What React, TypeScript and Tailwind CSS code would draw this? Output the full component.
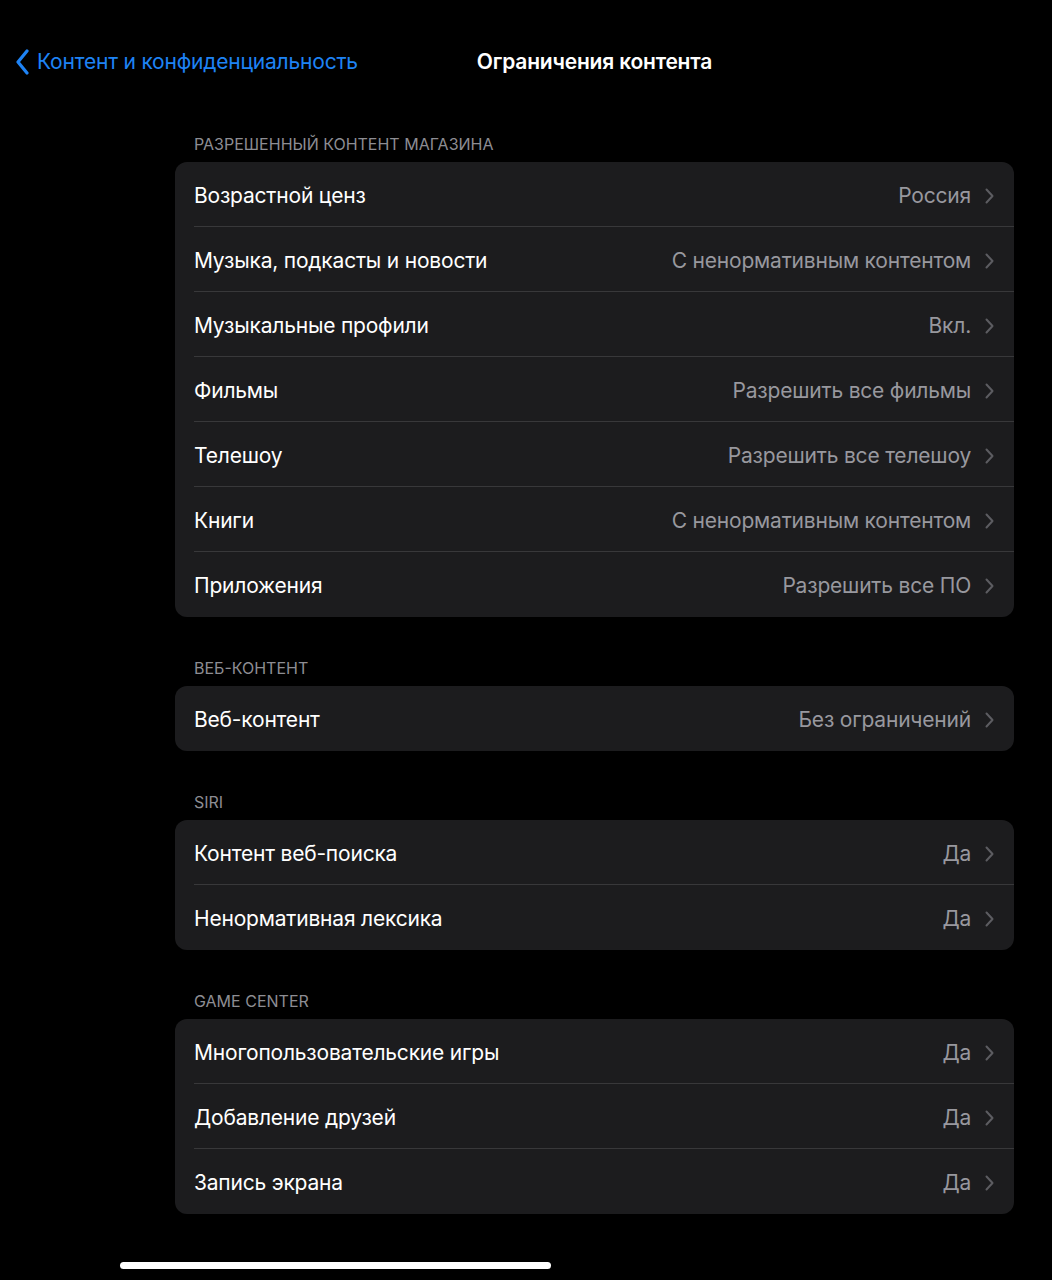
import React from "react";

type Row = { label: string; value: string };
type Section = { title: string; rows: Row[] };

const sections: Section[] = [
  {
    title: "Разрешенный контент магазина",
    rows: [
      { label: "Возрастной ценз", value: "Россия" },
      { label: "Музыка, подкасты и новости", value: "С ненормативным контентом" },
      { label: "Музыкальные профили", value: "Вкл." },
      { label: "Фильмы", value: "Разрешить все фильмы" },
      { label: "Телешоу", value: "Разрешить все телешоу" },
      { label: "Книги", value: "С ненормативным контентом" },
      { label: "Приложения", value: "Разрешить все ПО" },
    ],
  },
  {
    title: "Веб-контент",
    rows: [{ label: "Веб-контент", value: "Без ограничений" }],
  },
  {
    title: "Siri",
    rows: [
      { label: "Контент веб-поиска", value: "Да" },
      { label: "Ненормативная лексика", value: "Да" },
    ],
  },
  {
    title: "Game Center",
    rows: [
      { label: "Многопользовательские игры", value: "Да" },
      { label: "Добавление друзей", value: "Да" },
      { label: "Запись экрана", value: "Да" },
    ],
  },
];

function Chevron() {
  return (
    <svg width="9" height="16" viewBox="0 0 9 16" fill="none" className="shrink-0">
      <path d="M1.5 1.5L7.5 8L1.5 14.5" stroke="#5c5c61" strokeWidth="2" strokeLinecap="round" strokeLinejoin="round" />
    </svg>
  );
}

export default function App() {
  return (
    <div
      className="min-h-[1280px] w-full bg-black text-white flex flex-col"
      style={{ fontFamily: "Inter, 'Noto Sans', sans-serif" }}
    >
      {/* Nav bar */}
      <div className="relative h-[135px] pt-[49px] flex items-start">
        <div className="absolute left-[14px] top-[49px] flex items-center gap-[5px] text-[#1e83f5]">
          <svg width="18" height="26" viewBox="0 0 18 26" fill="none">
            <path d="M13 2L4 13L13 24" stroke="#1e83f5" strokeWidth="3.2" strokeLinecap="round" strokeLinejoin="round" />
          </svg>
          <span className="text-[21px] leading-[26px] tracking-[-0.2px]">Контент и конфиденциальность</span>
        </div>
        <div className="flex-1 pl-[175px] pr-[38px] flex justify-center">
          <span className="text-[21px] leading-[26px] font-semibold tracking-[-0.2px]">Ограничения контента</span>
        </div>
      </div>

      <div className="pl-[175px] pr-[38px] flex flex-col gap-[42px]">
        {sections.map((s) => (
          <div key={s.title} className="flex flex-col">
            <div className="pl-[19px] pb-[9px] text-[16px] leading-[18px] uppercase text-[#8d8d93]">{s.title}</div>
            <div className="bg-[#1c1c1e] rounded-[12px] overflow-hidden">
              {s.rows.map((r, i) => (
                <div key={r.label} className="pl-[19px]">
                  <div
                    className={
                      "h-[65px] pt-[3px] flex items-center pr-[20px] " +
                      (i < s.rows.length - 1 ? "border-b border-[#38383a]" : "")
                    }
                  >
                    <span className="flex-1 text-[21px] tracking-[-0.2px] text-white">{r.label}</span>
                    <span className="text-[21px] tracking-[-0.2px] text-[#98989e] mr-[14px]">{r.value}</span>
                    <Chevron />
                  </div>
                </div>
              ))}
            </div>
          </div>
        ))}
      </div>

      <div className="mt-[48px] ml-[120px] w-[431px] h-[7px] rounded-full bg-white" />
    </div>
  );
}
